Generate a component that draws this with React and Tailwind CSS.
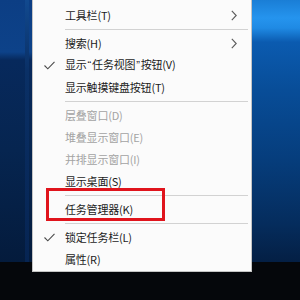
import React from 'react'

const items = [
  { type: 'item', label: '工具栏(T)', sub: true },
  { type: 'sep' },
  { type: 'item', label: '搜索(H)', sub: true },
  { type: 'item', label: ['显示', '“', '任务视图', '”', '按钮(V)'], checked: true },
  { type: 'item', label: '显示触摸键盘按钮(T)' },
  { type: 'sep' },
  { type: 'item', label: '层叠窗口(D)', disabled: true },
  { type: 'item', label: '堆叠显示窗口(E)', disabled: true },
  { type: 'item', label: '并排显示窗口(I)', disabled: true },
  { type: 'item', label: '显示桌面(S)' },
  { type: 'sep' },
  { type: 'item', label: '任务管理器(K)' },
  { type: 'sep' },
  { type: 'item', label: '锁定任务栏(L)', checked: true },
  { type: 'item', label: '属性(R)' },
]

function Check() {
  return (
    <svg width="11" height="9" viewBox="0 0 11 9" fill="none">
      <polyline points="0.5,4.5 3.8,7.8 10.5,0.8" stroke="#4a4a4a" strokeWidth="1.1" />
    </svg>
  )
}

function Chevron() {
  return (
    <svg width="6" height="11" viewBox="0 0 6 11" fill="none">
      <polyline points="0.8,0.8 5.2,5.5 0.8,10.2" stroke="#5a5a5a" strokeWidth="1.1" />
    </svg>
  )
}

function Label({ label }) {
  if (typeof label === 'string') return label
  // quotes drawn with a narrow latin font, like the original menu
  return label.map((part, i) =>
    part === '“' || part === '”'
      ? <span key={i} className="font-['Liberation_Sans'] px-[1px]">{part}</span>
      : <span key={i}>{part}</span>
  )
}

function MenuRow({ item }) {
  if (item.type === 'sep') {
    return (
      <div className="h-[6px] flex items-center pl-[32px] pr-[3px]">
        <div className="h-px w-full bg-[#d2d2d2]"></div>
      </div>
    )
  }
  return (
    <div className="relative h-[22px] flex items-center">
      <div className="w-[32px] flex justify-center pl-px">
        {item.checked && <Check />}
      </div>
      <span className={`flex-1 text-[11px] leading-none tracking-[-0.2px] ${item.disabled ? 'text-[#a3a3a3]' : 'text-[#1b1b1b]'}`}>
        <Label label={item.label} />
      </span>
      {item.sub && (
        <div className="w-[22px] flex justify-start pl-[2px]">
          <Chevron />
        </div>
      )}
    </div>
  )
}

export default function App() {
  return (
    <div
      className="w-[300px] h-[300px] overflow-hidden flex flex-col bg-black"
      style={{ fontFamily: '"Noto Sans CJK SC", "Liberation Sans", sans-serif' }}
    >
      <div className="h-[262px] flex">
        {/* left wallpaper strip */}
        <div className="w-[32px] bg-[linear-gradient(to_bottom,#0c3e84_0px,#0d4289_52px,#07295c_60px,#062550_150px,#041b3c_262px)] flex justify-end">
          <div className="w-[4px] mr-[3px] bg-[linear-gradient(to_bottom,#11498f_0px,#0a3066_70px,#062452_262px)]"></div>
        </div>

        {/* context menu */}
        <div className="relative z-10 w-[220px]">
          <div className="h-[272px] bg-[#fbfbfb] border-x border-b border-[#c4c4c4] pt-[4px] flex flex-col">
            {items.map((it, i) => (
              <MenuRow key={i} item={it} />
            ))}
          </div>
          {/* annotation box */}
          <div className="absolute left-[14px] top-[188px] w-[119px] h-[33px] border-[3px] border-[#e0141c]"></div>
        </div>

        {/* right wallpaper strip */}
        <div className="flex-1 bg-[linear-gradient(to_bottom,#1a7ed6_0px,#2594ee_18px,#1f8ae4_28px,#0b5bb0_42px,#084d98_90px,#063d7c_160px,#052c5c_225px,#041f44_262px)]"></div>
      </div>

      {/* taskbar */}
      <div className="flex-1 bg-[#05070b]"></div>
    </div>
  )
}
